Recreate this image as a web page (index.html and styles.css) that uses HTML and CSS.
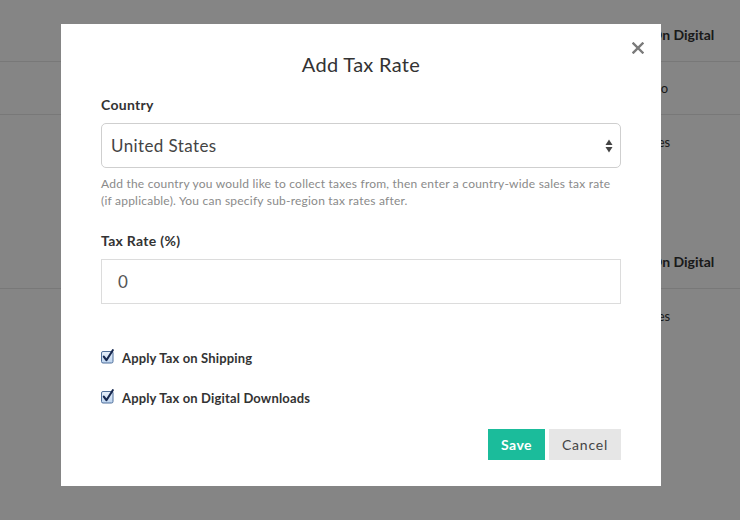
FILE: index.html
```html
<!DOCTYPE html>
<html>
<head>
<meta charset="utf-8">
<link rel="stylesheet" href="styles.css">
</head>
<body>
<div class="page">
  <div class="table">
    <div class="row head"><span class="cell">On Digital</span></div>
    <div class="row line"><span class="cell">No</span></div>
    <div class="row"><span class="cell">Yes</span></div>
  </div>
  <div class="table second">
    <div class="row head line"><span class="cell">On Digital</span></div>
    <div class="row"><span class="cell">Yes</span></div>
  </div>
</div>

<div class="overlay">
  <div class="modal">
    <button class="close" aria-label="Close">
      <svg width="12" height="12" viewBox="0 0 12 12"><path d="M1.5 1.5L10.5 10.5M10.5 1.5L1.5 10.5" stroke="#7a7a7a" stroke-width="2.4" stroke-linecap="square"/></svg>
    </button>
    <h1 class="title">Add Tax Rate</h1>

    <div class="label">Country</div>
    <div class="select">
      <span>United States</span>
      <svg class="arrows" width="8" height="16" viewBox="0 0 8 16"><path d="M4 1.5L7.5 7H0.5Z" fill="#444"/><path d="M4 14.5L7.5 9H0.5Z" fill="#444"/></svg>
    </div>
    <p class="help">Add the country you would like to collect taxes from, then enter a country-wide sales tax rate (if applicable). You can specify sub-region tax rates after.</p>

    <div class="label second-label">Tax Rate (%)</div>
    <div class="input">0</div>

    <label class="check first-check">
      <svg class="box" width="15" height="15" viewBox="0 0 15 15">
        <defs><linearGradient id="g" x1="0" y1="0" x2="0" y2="1"><stop offset="0" stop-color="#e9f1fb"/><stop offset="1" stop-color="#bcd3ee"/></linearGradient></defs>
        <rect x="0.5" y="2.5" width="11.5" height="11.5" rx="1.5" fill="url(#g)" stroke="#4f6f9a"/>
        <path d="M2.8 7.6L5.4 11.2L11.8 1.2" fill="none" stroke="#17284f" stroke-width="2.1" stroke-linecap="round" stroke-linejoin="round"/>
      </svg>
      <span>Apply Tax on Shipping</span>
    </label>
    <label class="check second-check">
      <svg class="box" width="15" height="15" viewBox="0 0 15 15">
        <defs><linearGradient id="g2" x1="0" y1="0" x2="0" y2="1"><stop offset="0" stop-color="#e9f1fb"/><stop offset="1" stop-color="#bcd3ee"/></linearGradient></defs>
        <rect x="0.5" y="2.5" width="11.5" height="11.5" rx="1.5" fill="url(#g2)" stroke="#4f6f9a"/>
        <path d="M2.8 7.6L5.4 11.2L11.8 1.2" fill="none" stroke="#17284f" stroke-width="2.1" stroke-linecap="round" stroke-linejoin="round"/>
      </svg>
      <span>Apply Tax on Digital Downloads</span>
    </label>

    <div class="actions">
      <button class="btn save">Save</button>
      <button class="btn cancel">Cancel</button>
    </div>
  </div>
</div>
</body>
</html>
```

FILE: styles.css
```css
* { box-sizing: border-box; }
html, body { margin: 0; padding: 0; }
body {
  width: 740px;
  height: 520px;
  overflow: hidden;
  background: #fff;
  font-family: "Lato", "Open Sans", sans-serif;
  color: #333;
}

.page { padding-top: 8px; }
.table .row {
  height: 53px;
  display: flex;
  align-items: center;
  padding-left: 651px;
  font-size: 13px;
  color: #333;
}
.table .row.head { height: 54px; font-weight: 700; font-size: 14px; }
.table .head { border-bottom: 1px solid #e6e6e6; }
.table .row.line { border-bottom: 1px solid #e6e6e6; }
.table.second { margin-top: 67px; }

.overlay {
  position: fixed;
  inset: 0;
  background: rgba(0, 0, 0, 0.48);
}

.modal {
  position: relative;
  width: 600px;
  height: 462px;
  margin: 24px 0 0 61px;
  background: #fff;
  padding: 28px 40px 26px;
}

.close {
  position: absolute;
  top: 15px;
  right: 14px;
  width: 18px;
  height: 18px;
  padding: 0;
  border: 0;
  background: none;
  display: flex;
  align-items: center;
  justify-content: center;
}

.title {
  margin: 0;
  text-align: center;
  font-size: 20px;
  line-height: 24px;
  letter-spacing: 0.3px;
  font-weight: 400;
  color: #333;
}

.label {
  margin-top: 21px;
  font-size: 14px;
  line-height: 16px;
  letter-spacing: 0.3px;
  font-weight: 700;
  color: #333;
}
.label.second-label { margin-top: 24px; }

.select {
  margin-top: 10px;
  height: 45px;
  border: 1px solid #cfcfcf;
  border-radius: 5px;
  display: flex;
  align-items: center;
  justify-content: space-between;
  padding: 0 7px 0 9px;
  font-size: 17px;
  letter-spacing: 0.4px;
  color: #444;
}
.arrows { margin-top: 1px; }

.help {
  margin: 7px 0 0;
  font-size: 12px;
  line-height: 17px;
  letter-spacing: 0.22px;
  color: #8a8a8a;
}

.input {
  margin-top: 10px;
  height: 45px;
  border: 1px solid #dcdcdc;
  display: flex;
  align-items: center;
  padding-left: 16px;
  font-size: 17px;
  color: #555;
}

.check {
  display: flex;
  align-items: center;
  height: 16px;
  font-size: 13px;
  letter-spacing: 0.15px;
  font-weight: 700;
  color: #333;
}
.check .box { margin-right: 6px; margin-top: -3px; }
.first-check { margin-top: 46px; }
.second-check { margin-top: 24px; }

.actions {
  margin-top: 23px;
  display: flex;
  justify-content: flex-end;
  gap: 4px;
}
.btn {
  height: 31px;
  border: 0;
  font-family: inherit;
  font-size: 14px;
  padding: 0;
}
.save {
  width: 57px;
  background: #1bbc9b;
  color: #fff;
  font-weight: 700;
  letter-spacing: 0.4px;
}
.cancel {
  width: 72px;
  background: #e6e6e6;
  color: #444;
  letter-spacing: 0.8px;
}
```
